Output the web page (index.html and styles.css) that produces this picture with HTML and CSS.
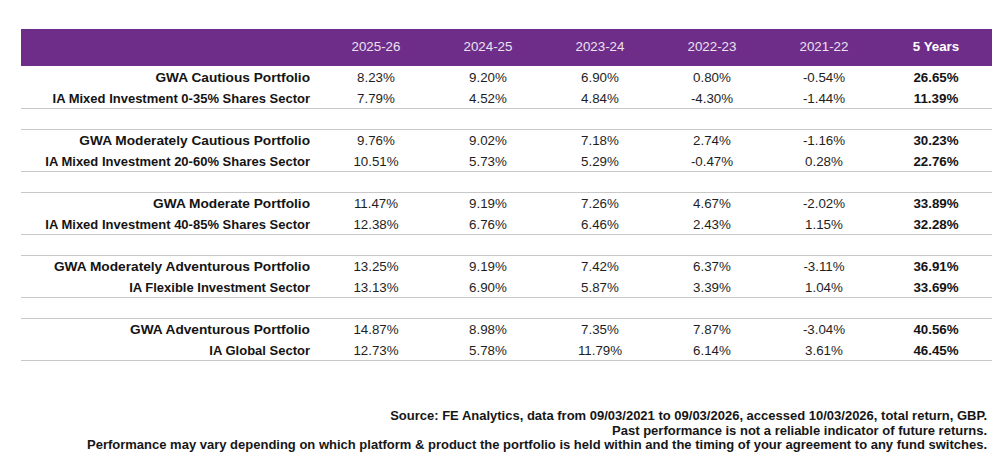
FILE: index.html
```html
<!DOCTYPE html>
<html lang="en">
<head>
<meta charset="utf-8">
<title>Portfolio performance</title>
<link rel="stylesheet" href="styles.css">
</head>
<body>
<div class="perf">
  <div class="row head">
    <div class="label"></div>
    <div class="cell">2025-26</div>
    <div class="cell">2024-25</div>
    <div class="cell">2023-24</div>
    <div class="cell">2022-23</div>
    <div class="cell">2021-22</div>
    <div class="cell total">5 Years</div>
  </div>

  <div class="group">
    <div class="row">
      <div class="label fund">GWA Cautious Portfolio</div>
      <div class="cell">8.23%</div><div class="cell">9.20%</div><div class="cell">6.90%</div><div class="cell">0.80%</div><div class="cell">-0.54%</div><div class="cell total">26.65%</div>
    </div>
    <div class="row second">
      <div class="label sector">IA Mixed Investment 0-35% Shares Sector</div>
      <div class="cell">7.79%</div><div class="cell">4.52%</div><div class="cell">4.84%</div><div class="cell">-4.30%</div><div class="cell">-1.44%</div><div class="cell total">11.39%</div>
    </div>
  </div>
  <div class="spacer"></div>

  <div class="group">
    <div class="row">
      <div class="label fund">GWA Moderately Cautious Portfolio</div>
      <div class="cell">9.76%</div><div class="cell">9.02%</div><div class="cell">7.18%</div><div class="cell">2.74%</div><div class="cell">-1.16%</div><div class="cell total">30.23%</div>
    </div>
    <div class="row second">
      <div class="label sector">IA Mixed Investment 20-60% Shares Sector</div>
      <div class="cell">10.51%</div><div class="cell">5.73%</div><div class="cell">5.29%</div><div class="cell">-0.47%</div><div class="cell">0.28%</div><div class="cell total">22.76%</div>
    </div>
  </div>
  <div class="spacer"></div>

  <div class="group">
    <div class="row">
      <div class="label fund">GWA Moderate Portfolio</div>
      <div class="cell">11.47%</div><div class="cell">9.19%</div><div class="cell">7.26%</div><div class="cell">4.67%</div><div class="cell">-2.02%</div><div class="cell total">33.89%</div>
    </div>
    <div class="row second">
      <div class="label sector">IA Mixed Investment 40-85% Shares Sector</div>
      <div class="cell">12.38%</div><div class="cell">6.76%</div><div class="cell">6.46%</div><div class="cell">2.43%</div><div class="cell">1.15%</div><div class="cell total">32.28%</div>
    </div>
  </div>
  <div class="spacer"></div>

  <div class="group">
    <div class="row">
      <div class="label fund">GWA Moderately Adventurous Portfolio</div>
      <div class="cell">13.25%</div><div class="cell">9.19%</div><div class="cell">7.42%</div><div class="cell">6.37%</div><div class="cell">-3.11%</div><div class="cell total">36.91%</div>
    </div>
    <div class="row second">
      <div class="label sector">IA Flexible Investment Sector</div>
      <div class="cell">13.13%</div><div class="cell">6.90%</div><div class="cell">5.87%</div><div class="cell">3.39%</div><div class="cell">1.04%</div><div class="cell total">33.69%</div>
    </div>
  </div>
  <div class="spacer"></div>

  <div class="group">
    <div class="row">
      <div class="label fund">GWA Adventurous Portfolio</div>
      <div class="cell">14.87%</div><div class="cell">8.98%</div><div class="cell">7.35%</div><div class="cell">7.87%</div><div class="cell">-3.04%</div><div class="cell total">40.56%</div>
    </div>
    <div class="row second">
      <div class="label sector">IA Global Sector</div>
      <div class="cell">12.73%</div><div class="cell">5.78%</div><div class="cell">11.79%</div><div class="cell">6.14%</div><div class="cell">3.61%</div><div class="cell total">46.45%</div>
    </div>
  </div>
</div>

<div class="notes">
  <p>Source: FE Analytics, data from 09/03/2021 to 09/03/2026, accessed 10/03/2026, total return, GBP.</p>
  <p>Past performance is not a reliable indicator of future returns.</p>
  <p>Performance may vary depending on which platform &amp; product the portfolio is held within and the timing of your agreement to any fund switches.</p>
</div>
</body>
</html>
```

FILE: styles.css
```css
html, body {
  margin: 0;
  padding: 0;
  background: #ffffff;
}

body {
  font-family: "Liberation Sans", Arial, sans-serif;
  font-size: 13.33px;
  color: #1e1e1e;
  width: 1007px;
}

.perf {
  margin: 29px 0 0 21px;
  width: 971px;
}

.row {
  display: grid;
  grid-template-columns: 299px repeat(6, 112px);
  align-items: center;
  height: 21px;
}

.row.second {
  height: 20px;
}

.head {
  height: 37px;
  background: #6e2d88;
  color: #ece3f1;
  margin-bottom: 1px;
}

.head .cell {
  padding-bottom: 2px;
}

.head .total {
  color: #ffffff;
}

.label {
  text-align: right;
  padding-right: 10px;
  font-weight: bold;
  color: #141414;
  white-space: nowrap;
}

.label.fund {
  font-size: 13.7px;
}

.label.sector {
  font-size: 13px;
}

.cell {
  text-align: center;
  white-space: nowrap;
}

.total {
  font-weight: bold;
  color: #141414;
}

.group {
  border-bottom: 1px solid #c8c8c8;
}

.spacer {
  height: 20px;
  border-bottom: 1px solid #c8c8c8;
}

.notes {
  margin-top: 48px;
  padding-right: 20px;
  text-align: right;
  font-size: 13px;
  font-weight: bold;
  color: #161616;
  line-height: 14.5px;
}

.notes p {
  margin: 0;
}
```
